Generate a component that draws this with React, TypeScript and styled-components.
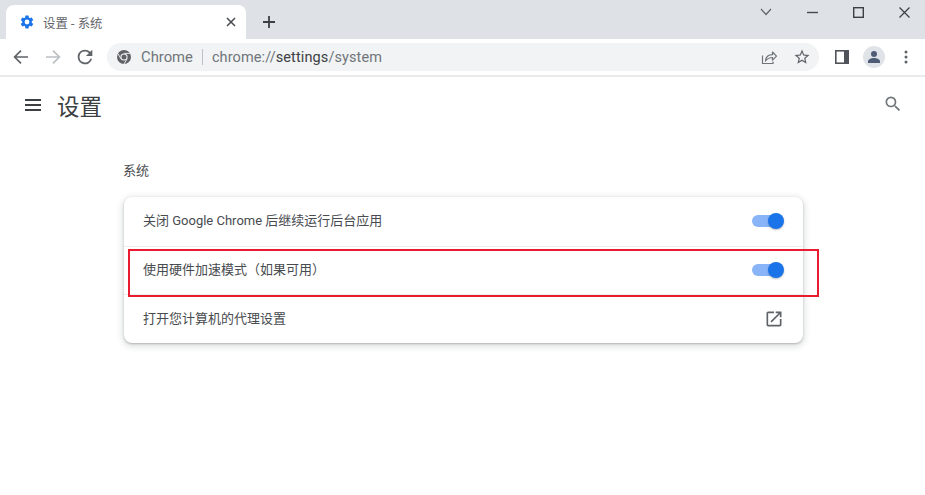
import React from "react";
import styled, { createGlobalStyle } from "styled-components";

const Global = createGlobalStyle`
  html, body { margin: 0; padding: 0; background: #fff; }
  body { width: 925px; height: 495px; overflow: hidden; font-family: Roboto, "Liberation Sans", "Noto Sans CJK SC", sans-serif; }
`;

const Page = styled.div`
  position: relative; width: 925px; height: 495px; display: flex; flex-direction: column; background: #fff; overflow: hidden;
`;
const TabStrip = styled.div`
  height: 39px; background: #dee1e6; display: flex; align-items: flex-end; padding-left: 6px; flex: none;
`;
const Tab = styled.div`
  width: 240px; height: 34px; background: #fff; border-radius: 8px 8px 0 0; display: flex; align-items: center; padding: 0 10px 0 12.5px; box-sizing: border-box;
`;
const TabTitle = styled.span`
  margin-left: 8.5px; padding-top: 1px; flex: 1; font-size: 12.4px; color: #5f6368; font-family: "Noto Sans CJK SC", sans-serif;
`;
const NewTab = styled.div`
  width: 34px; height: 34px; margin-left: 6px; display: flex; align-items: center; justify-content: center;
`;
const WindowControls = styled.div`
  margin-left: auto; align-self: flex-start; display: flex; height: 24px; align-items: center;
`;
const WinButton = styled.div`
  width: 46px; height: 24px; padding-left: 4px; box-sizing: border-box; display: flex; align-items: center; justify-content: center;
`;
const Toolbar = styled.div`
  height: 36px; flex: none; display: flex; align-items: center; padding-left: 4.5px; border-bottom: 2px solid #e9eaec; background: #fff;
`;
const NavButton = styled.div`
  width: 32px; height: 32px; display: flex; align-items: center; justify-content: center;
`;
const Omnibox = styled.div`
  margin-left: 6.5px; width: 712px; height: 28px; background: #f1f3f4; border-radius: 14px; display: flex; align-items: center; padding-left: 9px; box-sizing: border-box; font-size: 14.5px;
`;
const Origin = styled.span`color: #70757a; margin-left: 9px; font-size: 14.8px;`;
const Pipe = styled.span`width: 1px; height: 16px; background: #bdc1c6; margin: 0 9px 0 9px;`;
const Url = styled.span`color: #70757a; letter-spacing: 0.1px;`;
const UrlStrong = styled.span`color: #3c4043;`;
const OmniActions = styled.div`
  margin-left: auto; display: flex; align-items: center; gap: 15px; padding-right: 8px;
`;
const ToolActions = styled.div`
  display: flex; align-items: center; margin-left: 15.5px;
`;
const Avatar = styled.div`
  width: 22px; height: 22px; border-radius: 50%; background: #e0e3e8; display: flex; align-items: center; justify-content: center; margin: 0 19.5px 0 14px;
`;
const Header = styled.div`
  height: 56px; flex: none; display: flex; align-items: center; padding: 0 22px 0 24px;
`;
const HeaderTitle = styled.h1`
  margin: 0 0 0 15px; font-size: 22.5px; font-weight: 400; color: #3c4043; font-family: "Noto Sans CJK SC", sans-serif; flex: 1; line-height: 1;
`;
const SearchButton = styled.div`
  width: 20px; height: 20px; margin-bottom: 2px; display: flex;
`;
const Content = styled.main`
  width: 679px; margin-left: 124px; display: flex; flex-direction: column;
`;
const SectionTitle = styled.h2`
  margin: 27px 0 18px -1px; font-size: 13px; line-height: 19px; font-weight: 400; color: #484b4f; font-family: "Noto Sans CJK SC", sans-serif;
`;
const Card = styled.section`
  background: #fff; border-radius: 8px; box-shadow: 0 1px 2px rgba(60,64,67,.3), 0 2px 6px 2px rgba(60,64,67,.15);
  display: flex; flex-direction: column;
`;
const Row = styled.div<{ $divider?: boolean }>`
  height: 48.67px; display: flex; align-items: center; justify-content: space-between; padding: 0 19px; box-sizing: border-box;
  border-top: ${(p) => (p.$divider ? "1px solid #eceded" : "none")};
`;
const RowLabel = styled.span`
  font-size: 13px; color: #484b4f; font-family: Roboto, "Noto Sans CJK SC", sans-serif; position: relative; top: -2px;
`;
const Switch = styled.div`
  position: relative; width: 32px; height: 16px; display: flex; align-items: center;
`;
const Track = styled.div`
  width: 28px; height: 12px; border-radius: 6px; background: #8ab4f8; margin-right: auto;
`;
const Knob = styled.div`
  position: absolute; right: 0; top: 0; width: 16px; height: 16px; border-radius: 50%; background: #1a73e8; box-shadow: 0 1px 2px rgba(60,64,67,.35);
`;
const Highlight = styled.div`
  position: absolute; left: 128px; top: 249px; width: 691px; height: 48px; box-sizing: border-box; border: 2px solid #e81c2e; pointer-events: none;
`;

const Gear = () => (
  <svg width="16" height="16" viewBox="0 0 24 24"><path fill="#1a73e8" d="M19.14 12.94c.04-.3.06-.61.06-.94 0-.32-.02-.64-.07-.94l2.03-1.58a.49.49 0 0 0 .12-.61l-1.92-3.32a.488.488 0 0 0-.59-.22l-2.39.96c-.5-.38-1.03-.7-1.62-.94l-.36-2.54a.484.484 0 0 0-.48-.41h-3.84c-.24 0-.43.17-.47.41l-.36 2.54c-.59.24-1.13.57-1.62.94l-2.39-.96c-.22-.08-.47 0-.59.22L2.74 8.87c-.12.21-.08.47.12.61l2.03 1.58c-.05.3-.09.63-.09.94s.02.64.07.94l-2.03 1.58a.49.49 0 0 0-.12.61l1.92 3.32c.12.22.37.29.59.22l2.39-.96c.5.38 1.03.7 1.62.94l.36 2.54c.05.24.24.41.48.41h3.84c.24 0 .44-.17.47-.41l.36-2.54c.59-.24 1.13-.56 1.62-.94l2.39.96c.22.08.47 0 .59-.22l1.92-3.32c.12-.22.07-.47-.12-.61l-2.01-1.58zM12 15.6A3.6 3.6 0 1 1 12 8.4a3.6 3.6 0 0 1 0 7.2z"/></svg>
);
const Arrow = ({ color, flip }: { color: string; flip?: boolean }) => (
  <svg width="16" height="16" viewBox="0 0 16 16" style={flip ? { transform: "scaleX(-1)" } : undefined}><path d="M15 8H1.8M8 1.6 1.6 8 8 14.4" fill="none" stroke={color} strokeWidth="1.7"/></svg>
);

export default function App() {
  return (
    <Page>
      <Global />
      <TabStrip>
        <Tab>
          <Gear />
          <TabTitle>设置 - 系统</TabTitle>
          <svg width="10" height="10" viewBox="0 0 10 10"><path d="M1 1l8 8M9 1l-8 8" stroke="#45484c" strokeWidth="1.5"/></svg>
        </Tab>
        <NewTab>
          <svg width="14" height="14" viewBox="0 0 14 14"><path d="M7 1v12M1 7h12" stroke="#3c4043" strokeWidth="1.8"/></svg>
        </NewTab>
        <WindowControls>
          <WinButton><svg width="12" height="8" viewBox="0 0 12 8"><path d="M1 1l5 5.5L11 1" fill="none" stroke="#5f6368" strokeWidth="1.2"/></svg></WinButton>
          <WinButton><svg width="11" height="3" viewBox="0 0 11 3"><path d="M0 1.5h11" stroke="#45484c" strokeWidth="1.4"/></svg></WinButton>
          <WinButton><svg width="11" height="11" viewBox="0 0 11 11"><rect x=".7" y=".7" width="9.6" height="9.6" fill="none" stroke="#3c4043" strokeWidth="1.4"/></svg></WinButton>
          <WinButton><svg width="11" height="11" viewBox="0 0 11 11"><path d="M.5.5l10 10M10.5.5l-10 10" stroke="#3c4043" strokeWidth="1.2"/></svg></WinButton>
        </WindowControls>
      </TabStrip>
      <Toolbar>
        <NavButton><Arrow color="#5f6368" /></NavButton>
        <NavButton><Arrow color="#bcbfc3" flip /></NavButton>
        <NavButton>
          <svg width="22" height="22" viewBox="0 0 24 24"><path fill="#5f6368" d="M17.65 6.35A7.96 7.96 0 0 0 12 4a8 8 0 1 0 7.73 10h-2.08A6 6 0 1 1 12 6c1.66 0 3.14.69 4.22 1.78L13 11h7V4l-2.35 2.35z"/></svg>
        </NavButton>
        <Omnibox>
          <svg width="16" height="16" viewBox="0 0 16 16"><circle cx="8" cy="8" r="7" fill="#5f6368"/><circle cx="8" cy="8" r="3.6" fill="#f1f3f4"/><circle cx="8" cy="8" r="2.5" fill="#5f6368"/><path d="M8 4.4h6M4.9 9.8 1.9 4.5M11.1 9.8 8 15" stroke="#f1f3f4" strokeWidth=".9"/></svg>
          <Origin>Chrome</Origin>
          <Pipe />
          <Url>chrome://<UrlStrong>settings</UrlStrong>/system</Url>
          <OmniActions>
            <svg width="18" height="18" viewBox="0 0 18 18"><path d="M2.5 7.5v8h10.5v-2" fill="none" stroke="#70757a" strokeWidth="1.2"/><path d="M5.5 13c.3-4 3-6.300 7-6.300V4l4 4.200-4 4V9.500c-3 0-5 1-7 3.500z" fill="none" stroke="#70757a" strokeWidth="1.2" strokeLinejoin="round"/></svg>
            <svg width="18" height="18" viewBox="0 0 24 24"><path fill="#5f6368" d="M22 9.240l-7.190-.62L12 2 9.190 8.630 2 9.240l5.460 4.730L5.820 21 12 17.270 18.180 21l-1.630-7.030L22 9.240zM12 15.400l-3.760 2.270 1-4.280-3.320-2.880 4.380-.38L12 6.100l1.710 4.040 4.380.38-3.320 2.880 1 4.280L12 15.400z"/></svg>
          </OmniActions>
        </Omnibox>
        <ToolActions>
          <svg width="14" height="14" viewBox="0 0 14 14"><rect x=".8" y=".8" width="12.400" height="12.400" fill="#fff" stroke="#50545a" strokeWidth="1.600"/><rect x="9" y="1" width="4" height="12" fill="#50545a"/></svg>
          <Avatar>
            <svg width="14" height="14" viewBox="0 0 14 14"><circle cx="7" cy="4" r="3" fill="#4f5b75"/><path d="M1 13v-1.500C1 9.500 4 8 7 8s6 1.500 6 3.500V13z" fill="#4f5b75"/></svg>
          </Avatar>
          <svg width="4" height="14" viewBox="0 0 4 14"><circle cx="2" cy="2" r="1.500" fill="#5f6368"/><circle cx="2" cy="7" r="1.500" fill="#5f6368"/><circle cx="2" cy="12" r="1.500" fill="#5f6368"/></svg>
        </ToolActions>
      </Toolbar>
      <Header>
        <svg width="18" height="14" viewBox="0 0 18 14"><path d="M1 2h16M1 7h16M1 12h16" stroke="#3c4043" strokeWidth="1.900"/></svg>
        <HeaderTitle>设置</HeaderTitle>
        <SearchButton>
          <svg width="20" height="20" viewBox="0 0 24 24"><path fill="#70757a" d="M15.500 14h-.79l-.28-.27A6.470 6.470 0 0 0 16 9.500 6.500 6.500 0 1 0 9.500 16c1.610 0 3.090-.59 4.230-1.570l.27.28v.79l5 4.990L20.490 19l-4.990-5zm-6 0C7.010 14 5 11.990 5 9.500S7.010 5 9.500 5 14 7.010 14 9.500 11.990 14 9.500 14z"/></svg>
        </SearchButton>
      </Header>
      <Content>
        <SectionTitle>系统</SectionTitle>
        <Card>
          <Row>
            <RowLabel>关闭 Google Chrome 后继续运行后台应用</RowLabel>
            <Switch><Track /><Knob /></Switch>
          </Row>
          <Row $divider>
            <RowLabel>使用硬件加速模式（如果可用）</RowLabel>
            <Switch><Track /><Knob /></Switch>
          </Row>
          <Row $divider>
            <RowLabel>打开您计算机的代理设置</RowLabel>
            <svg width="20" height="20" viewBox="0 0 24 24"><path fill="#5f6368" d="M19 19H5V5h7V3H5a2 2 0 0 0-2 2v14a2 2 0 0 0 2 2h14c1.100 0 2-.9 2-2v-7h-2v7zM14 3v2h3.590l-9.830 9.830 1.410 1.410L19 6.410V10h2V3h-7z"/></svg>
          </Row>
        </Card>
      </Content>
      <Highlight />
    </Page>
  );
}
